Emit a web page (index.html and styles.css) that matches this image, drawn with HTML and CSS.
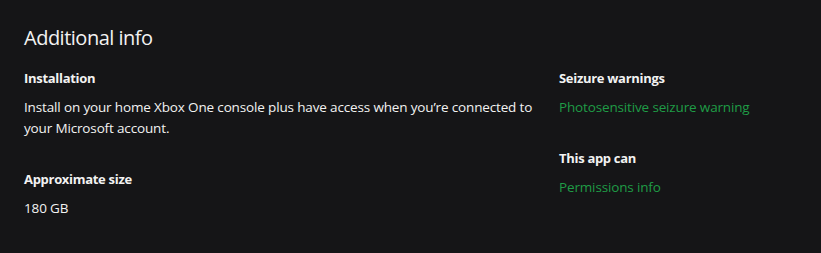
FILE: index.html
```html
<!DOCTYPE html>
<html lang="en">
<head>
<meta charset="utf-8">
<link rel="stylesheet" href="styles.css">
</head>
<body>
<section class="info">
  <h2 class="title">Additional info</h2>
  <div class="cols">
    <div class="col left">
      <div class="item">
        <h3 class="label">Installation</h3>
        <p class="text">Install on your home Xbox One console plus have access when you’re connected to your Microsoft account.</p>
      </div>
      <div class="item">
        <h3 class="label">Approximate size</h3>
        <p class="text">180 GB</p>
      </div>
    </div>
    <div class="col right">
      <div class="item">
        <h3 class="label">Seizure warnings</h3>
        <a class="link" href="#">Photosensitive seizure warning</a>
      </div>
      <div class="item">
        <h3 class="label">This app can</h3>
        <a class="link" href="#">Permissions info</a>
      </div>
    </div>
  </div>
</section>
</body>
</html>
```
FILE: styles.css
```css
html, body {
  margin: 0;
  padding: 0;
  background: #151517;
  width: 821px;
  height: 253px;
  overflow: hidden;
}
.info {
  padding: 25px 24px 0 24px;
  font-family: "Open Sans", "Noto Sans", sans-serif;
  color: #f2f2f2;
}
.title {
  margin: 0;
  font-size: 20px;
  font-weight: 400;
  line-height: 26px;
  letter-spacing: -0.5px;
}
.cols {
  display: flex;
  margin-top: 17px;
}
.left {
  width: 535px;
}
.col {
  display: flex;
  flex-direction: column;
  gap: 30px;
}
.item {
  display: flex;
  flex-direction: column;
}
.label {
  margin: 0;
  font-size: 13px;
  font-weight: 700;
  line-height: 20px;
  letter-spacing: -0.3px;
}
.text {
  margin: 9px 0 0 0;
  font-size: 13.5px;
  line-height: 21px;
  letter-spacing: -0.15px;
}
.link {
  margin-top: 9px;
  font-size: 13.5px;
  line-height: 21px;
  color: #1f9c46;
  text-decoration: none;
  letter-spacing: -0.15px;
}
```
